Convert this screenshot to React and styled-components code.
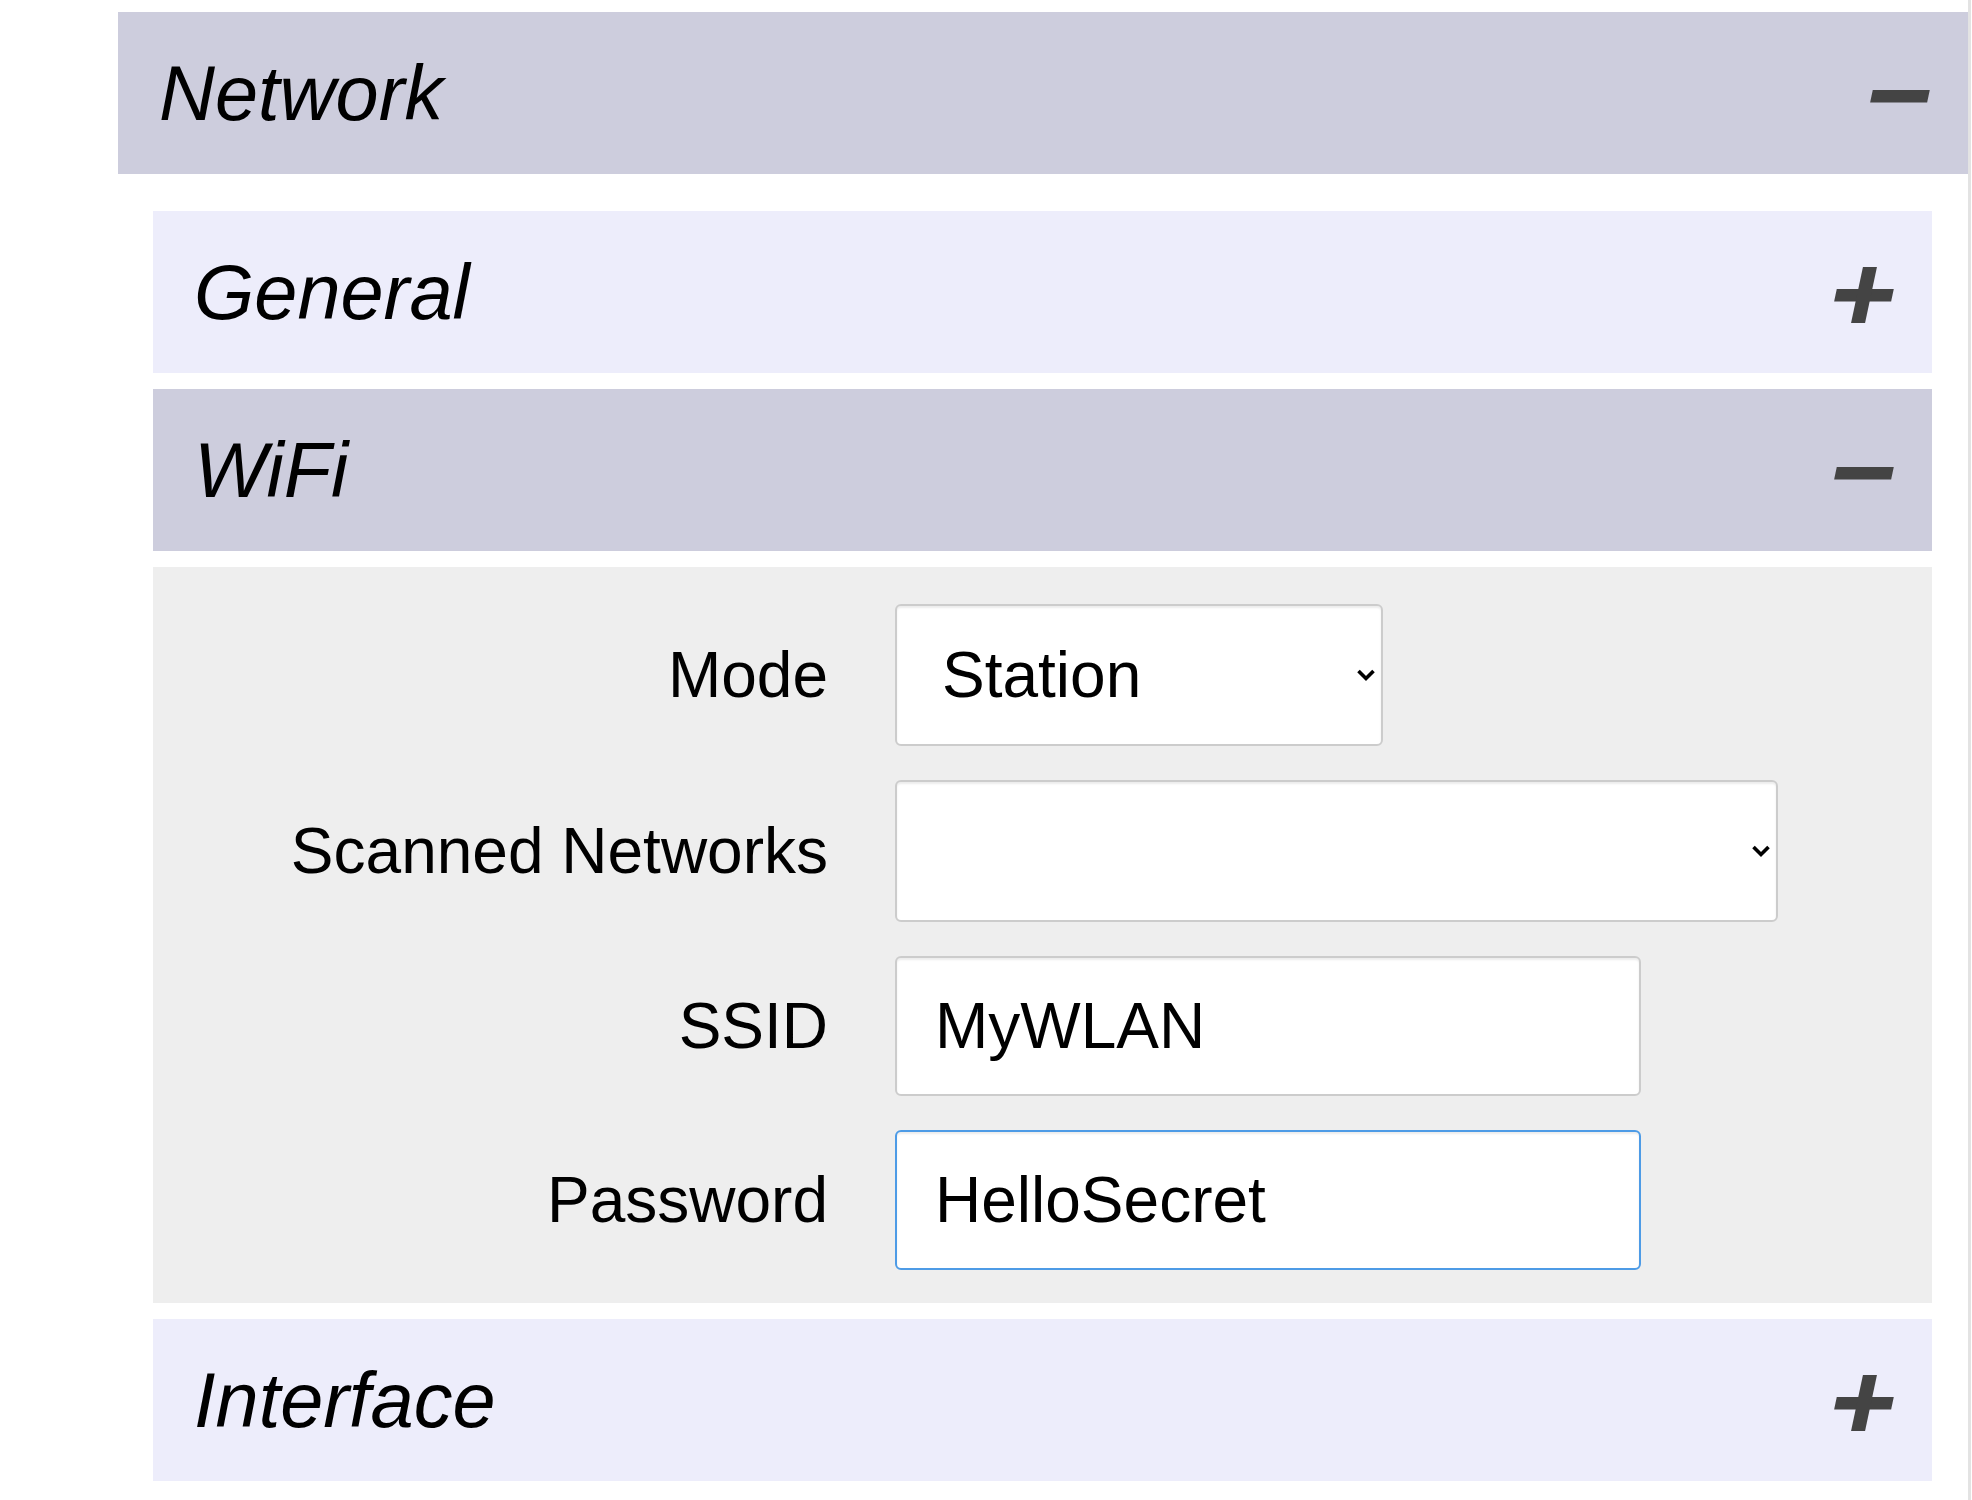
import React from "react";
import styled, { createGlobalStyle } from "styled-components";

const GlobalStyle = createGlobalStyle`
  html, body { margin: 0; padding: 0; background: #fff; }
  body {
    font-family: "Liberation Sans", Arial, Helvetica, sans-serif;
    color: #000;
    overflow: hidden;
  }
  * { box-sizing: border-box; }
`;

const Page = styled.div`
  display: flex;
  padding-left: 118px;
  min-height: 1500px;
`;

const Column = styled.div`
  width: 1853px;
  border-right: 3px solid #e3e3e3;
  padding-top: 12px;
`;

const SectionHeader = styled.div`
  display: flex;
  align-items: center;
  justify-content: space-between;
  height: 162px;
  padding: 0 38px 0 41px;
  background: ${(p) => (p.$open ? "#cdcddd" : "#ededfb")};
  cursor: pointer;
`;

const Title = styled.h2`
  margin: 0;
  font-size: 77.5px;
  font-style: italic;
  font-weight: normal;
  line-height: normal;
`;

const IconSvg = styled.svg`
  display: block;
  margin-top: 5px;
  flex: none;
`;

const SubList = styled.div`
  display: flex;
  flex-direction: column;
  gap: 16px;
  margin: 37px 36px 0 35px;
`;

const Panel = styled.div`
  display: flex;
  flex-direction: column;
  gap: 34px;
  padding: 37px 0 33px;
  background: #eeeeee;
`;

const FieldRow = styled.div`
  display: grid;
  grid-template-columns: 675px 1fr;
  column-gap: 67px;
  align-items: center;
`;

const Label = styled.label`
  text-align: right;
  font-size: 64px;
  line-height: normal;
`;

const SelectWrap = styled.div`
  position: relative;
  width: ${(p) => p.$width}px;
`;

const Select = styled.select`
  appearance: none;
  -webkit-appearance: none;
  display: block;
  width: 100%;
  height: 142px;
  margin: 0;
  padding: 0 40px 0 45px;
  border: 2px solid #cccccc;
  border-radius: 6px;
  background: #fff;
  box-shadow: inset 0 2px 2px rgba(0, 0, 0, 0.075);
  font-family: inherit;
  font-size: 64px;
  color: #000;
  outline: none;
`;

const Chevron = styled.svg`
  position: absolute;
  right: 7px;
  top: 50%;
  transform: translateY(-50%);
  pointer-events: none;
`;

const Input = styled.input`
  display: block;
  width: ${(p) => p.$width}px;
  height: 140px;
  margin: 0;
  padding: 0 38px;
  border: 2px solid ${(p) => (p.$focused ? "#4d9be6" : "#cccccc")};
  border-radius: 6px;
  background: #fff;
  box-shadow: inset 0 2px 2px rgba(0, 0, 0, 0.075);
  font-family: inherit;
  font-size: 64px;
  color: #000;
  outline: none;
`;

function ToggleIcon({ open }) {
  return (
    <IconSvg viewBox="0 0 60 56" width="60" height="56" aria-hidden="true">
      <g transform="translate(30 28) skewX(-12) translate(-30 -28)" fill="#444">
        <rect x="1.5" y="22" width="57" height="12.5" />
        {!open && <rect x="23" y="0" width="14" height="56" />}
      </g>
    </IconSvg>
  );
}

function Header({ title, open }) {
  return (
    <SectionHeader $open={open}>
      <Title>{title}</Title>
      <ToggleIcon open={open} />
    </SectionHeader>
  );
}

function SelectField({ width, children, defaultValue }) {
  return (
    <SelectWrap $width={width}>
      <Select defaultValue={defaultValue}>{children}</Select>
      <Chevron viewBox="0 0 20 13" width="20" height="13" aria-hidden="true">
        <polyline
          points="2.5,2.5 10,10 17.5,2.5"
          fill="none"
          stroke="#000"
          strokeWidth="3.6"
        />
      </Chevron>
    </SelectWrap>
  );
}

export default function App() {
  return (
    <>
      <GlobalStyle />
      <Page>
        <Column>
          <Header title="Network" open />
          <SubList>
            <Header title="General" />
            <Header title="WiFi" open />
            <Panel>
              <FieldRow>
                <Label>Mode</Label>
                <SelectField width={488} defaultValue="station">
                  <option value="station">Station</option>
                  <option value="ap">Access Point</option>
                </SelectField>
              </FieldRow>
              <FieldRow>
                <Label>Scanned Networks</Label>
                <SelectField width={883} defaultValue="">
                  <option value=""></option>
                </SelectField>
              </FieldRow>
              <FieldRow>
                <Label>SSID</Label>
                <Input $width={746} type="text" defaultValue="MyWLAN" />
              </FieldRow>
              <FieldRow>
                <Label>Password</Label>
                <Input $width={746} $focused type="text" defaultValue="HelloSecret" />
              </FieldRow>
            </Panel>
            <Header title="Interface" />
          </SubList>
        </Column>
      </Page>
    </>
  );
}
